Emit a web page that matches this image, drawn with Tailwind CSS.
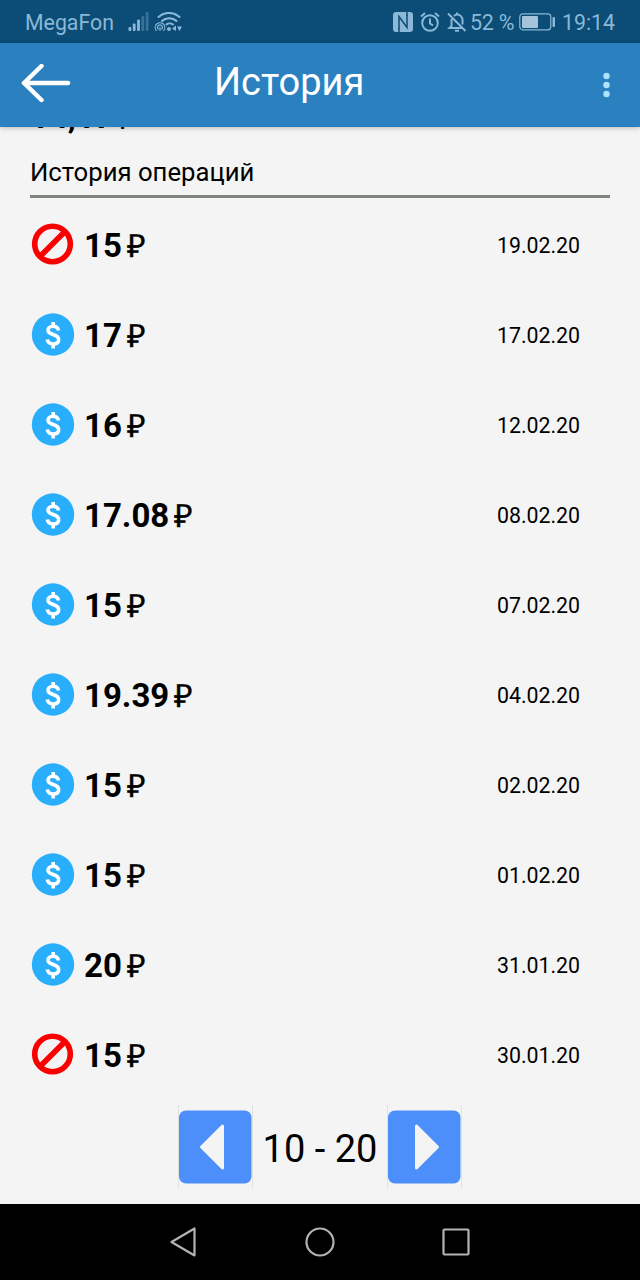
<!DOCTYPE html>
<html lang="ru">
<head>
  <meta charset="UTF-8" />
  <meta name="viewport" content="width=device-width, initial-scale=1.0" />
  <title>История</title>
  <script src="https://cdn.jsdelivr.net/npm/@tailwindcss/browser@4"></script>
</head>
<body class="w-[640px] h-[1280px] overflow-hidden flex flex-col bg-[#f4f4f4] text-black font-['Roboto',sans-serif]">

  <!-- Статус-бар -->
  <div class="h-[43px] shrink-0 flex items-center pl-[25px] pr-[25px] pt-[1px] bg-[#0b4d77] text-[#8ab8d6] text-[22px] leading-none">
    <span class="w-[103px] pt-[1px] text-[21.300px]">MegaFon</span>
    <svg class="w-[21px] h-[20px] shrink-0" viewBox="0 0 21 20" fill="#8ab8d6">
      <rect x="0.5" y="15" width="2.8" height="4" rx="1" />
      <rect x="4.8" y="11.5" width="2.8" height="7.5" rx="1" />
      <rect x="9.1" y="7.5" width="2.8" height="11.5" rx="1" />
      <rect x="13.4" y="4" width="2.8" height="15" rx="1" opacity=".35" />
      <rect x="17.7" y="0" width="2.8" height="19" rx="1" opacity=".35" />
    </svg>
    <svg class="w-[28px] h-[20px] ml-[5px] shrink-0" viewBox="0 0 28 20" fill="none" stroke="#8ab8d6" stroke-width="2" stroke-linecap="round">
      <path d="M4.500 5C10.500-.5 19.500-.5 25.500 5M8 9C12 5.200 18.500 5.200 22.500 9M12.500 12.500C14 11 17 11 19 12.500" />
      <circle cx="15" cy="17" r="2" fill="#8ab8d6" stroke="none" />
      <path d="M2.200 18.500A4.800 4.800 0 1 1 9.800 18.500M4.200 17A2.400 2.400 0 1 1 7.800 17M6 15.500V18.500" stroke-width="1.200" />
      <path d="M18 16.500l4-3v5.500zM23 14.500h5l-2.500 4.500z" fill="#8ab8d6" stroke="none" />
    </svg>
    <div class="flex items-center ml-auto">
      <svg class="w-[20px] h-[20px]" viewBox="0 0 20 20">
        <rect width="20" height="20" rx="3" fill="#8ab8d6" />
        <path d="M6 17V4.500L14 15.500V3" fill="none" stroke="#0b4d77" stroke-width="1.500" />
        <path d="M6 20V16M14 0V4" fill="none" stroke="#0b4d77" stroke-width="1.500" />
      </svg>
      <svg class="w-[20px] h-[20px] ml-[7px]" viewBox="0 0 20 20" fill="none" stroke="#8ab8d6" stroke-width="2">
        <circle cx="10" cy="11" r="7.800" />
        <path d="M10 6.500V11.500L13 13.500M1 4.500L5 1M19 4.500L15 1" />
      </svg>
      <svg class="w-[20px] h-[20px] ml-[7px]" viewBox="0 0 20 20" fill="none" stroke="#8ab8d6" stroke-width="2">
        <path d="M1 1.500L18.500 19M4.500 7V14L2.500 16H14.500M7 4C8 3 9 2.500 10 2.500C13 2.500 15.500 5 15.500 8V12.500M10 0.500V2.500M8 18.700H12" />
      </svg>
      <span class="ml-[3px] w-[45px] pt-[1px] text-[21.500px] tracking-[-0.200px] whitespace-nowrap">52 %</span>
      <svg class="w-[37px] h-[18px] ml-[4px]" viewBox="0 0 37 18">
        <rect x="0.800" y="0.800" width="31" height="16" rx="3" fill="none" stroke="#8ab8d6" stroke-width="1.200" />
        <rect x="3" y="3" width="16" height="12" rx="1" fill="#a5c3da" />
        <rect x="33.500" y="4" width="2.500" height="10" rx="1" fill="#8ab8d6" />
      </svg>
      <span class="ml-[6px] pt-[1px] text-[21.300px]">19:14</span>
    </div>
  </div>

  <!-- Шапка -->
  <header class="h-[84px] shrink-0 flex items-center pl-[21px] pr-[30px] bg-[#2b81bf] shadow-[0_1px_5px_rgba(0,0,0,0.25)]">
    <svg class="w-[50px] h-[42px]" viewBox="0 0 50 42" fill="none" stroke="#fff" stroke-width="4.500" stroke-linecap="round" stroke-linejoin="round">
      <path d="M47 19H3M20.500 2L3 19L20.500 36" />
    </svg>
    <h1 class="ml-[143px] pb-[6px] text-[38px] leading-none text-white">История</h1>
    <svg class="w-[8px] h-[26px] ml-auto" viewBox="0 0 8 26" fill="#aee3ff">
      <circle cx="4.500" cy="4" r="3.200" />
      <circle cx="4.500" cy="13" r="3.200" />
      <circle cx="4.500" cy="22" r="3.200" />
    </svg>
  </header>

  <!-- Список -->
  <main class="flex-1 px-[30px]">
    <!-- Баланс, прокрученный под шапку -->
    <div class="h-[8px] flex items-end overflow-hidden">
      <span class="pb-[8px] text-[33px] leading-[20px] font-bold">14,17</span>
      <span class="pb-[8px] ml-[4px] text-[32px] leading-[20px] font-['Lato']">₽</span>
    </div>
    <h2 class="h-[63px] pt-[22px] border-b-[3px] border-[#7f857e] text-[25.700px] leading-[30px]">История операций</h2>
    <ul id="operations" class="pt-[2px]"></ul>

    <div class="flex justify-center items-center mt-[5px] mr-[1px]">
      <button class="h-[84px] flex items-center border-x border-[#e2e2e2]">
        <svg class="w-[73px] h-[74px]" viewBox="0 0 73 74">
          <rect y="0.500" width="72.500" height="73" rx="7" fill="#4d8ffa" />
          <path d="M22.500 37L43.500 16V58Z" fill="#f4f4f4" stroke="#f4f4f4" stroke-width="3" stroke-linejoin="round" />
        </svg>
      </button>
      <span class="w-[134px] pl-[1px] pt-[3px] text-center text-[38px] leading-none">10 - 20</span>
      <button class="h-[84px] flex items-center border-x border-[#e2e2e2]">
        <svg class="w-[73px] h-[74px]" viewBox="0 0 73 74">
          <rect y="0.500" width="72.500" height="73" rx="7" fill="#4d8ffa" />
          <path d="M49.500 37L28.500 16V58Z" fill="#f4f4f4" stroke="#f4f4f4" stroke-width="3" stroke-linejoin="round" />
        </svg>
      </button>
    </div>
  </main>

  <!-- Навигация -->
  <nav class="h-[76px] shrink-0 flex items-center justify-center gap-[106px] bg-black">
    <svg class="w-[28px] h-[32px]" viewBox="0 0 28 32" fill="none" stroke="#b3b3b3" stroke-width="2.200" stroke-linejoin="round"><path d="M1.500 16L24.500 2.500V29.500Z" /></svg>
    <svg class="w-[32px] h-[32px]" viewBox="0 0 32 32" fill="none" stroke="#b3b3b3" stroke-width="2.200"><circle cx="16" cy="16" r="13.500" /></svg>
    <svg class="w-[28px] h-[32px]" viewBox="0 0 28 32" fill="none" stroke="#b3b3b3" stroke-width="2.200"><rect x="1.500" y="3.500" width="25" height="25" rx="1" /></svg>
  </nav>

  <script>
    // сумма, дата, выплачено
    const operations = [
      ['15', '19.02.20', false],
      ['17', '17.02.20', true],
      ['16', '12.02.20', true],
      ['17.08', '08.02.20', true],
      ['15', '07.02.20', true],
      ['19.39', '04.02.20', true],
      ['15', '02.02.20', true],
      ['15', '01.02.20', true],
      ['20', '31.01.20', true],
      ['15', '30.01.20', false],
    ];

    const paidIcon = `<svg class="w-[46px] h-[46px]" viewBox="0 0 46 46">
      <circle cx="23" cy="22.500" r="21.200" fill="#29aefc" />
      <path d="M28.500 18.500C28 15.800 26 14.300 23.200 14.300C20 14.300 18 16 18 18.300C18 23.500 28.700 21.500 28.700 27.500C28.700 30.500 26.500 32 23.200 32C19.800 32 17.800 30.300 17.300 27.500M23.200 10V14M23.200 32V36.500" fill="none" stroke="#fff" stroke-width="3.600" />
    </svg>`;
    const deniedIcon = `<svg class="w-[46px] h-[46px]" viewBox="0 0 46 46" fill="none" stroke="#fa0000" stroke-width="5.600">
      <circle cx="22.500" cy="22" r="17.800" />
      <path d="M10 34.500L35 9.500" />
    </svg>`;

    document.getElementById('operations').innerHTML = operations.map(([sum, date, paid]) => `
      <li class="h-[90px] flex items-center pr-[30px]">
        ${paid ? paidIcon : deniedIcon}
        <span class="ml-[8px] text-[33px] leading-none font-bold">${sum}</span>
        <span class="ml-[5px] text-[32px] leading-none font-['Lato'] [-webkit-text-stroke:0.4px_black]">₽</span>
        <span class="ml-auto pt-[1px] text-[21.300px] leading-none">${date}</span>
      </li>`).join('');
  </script>
</body>
</html>
